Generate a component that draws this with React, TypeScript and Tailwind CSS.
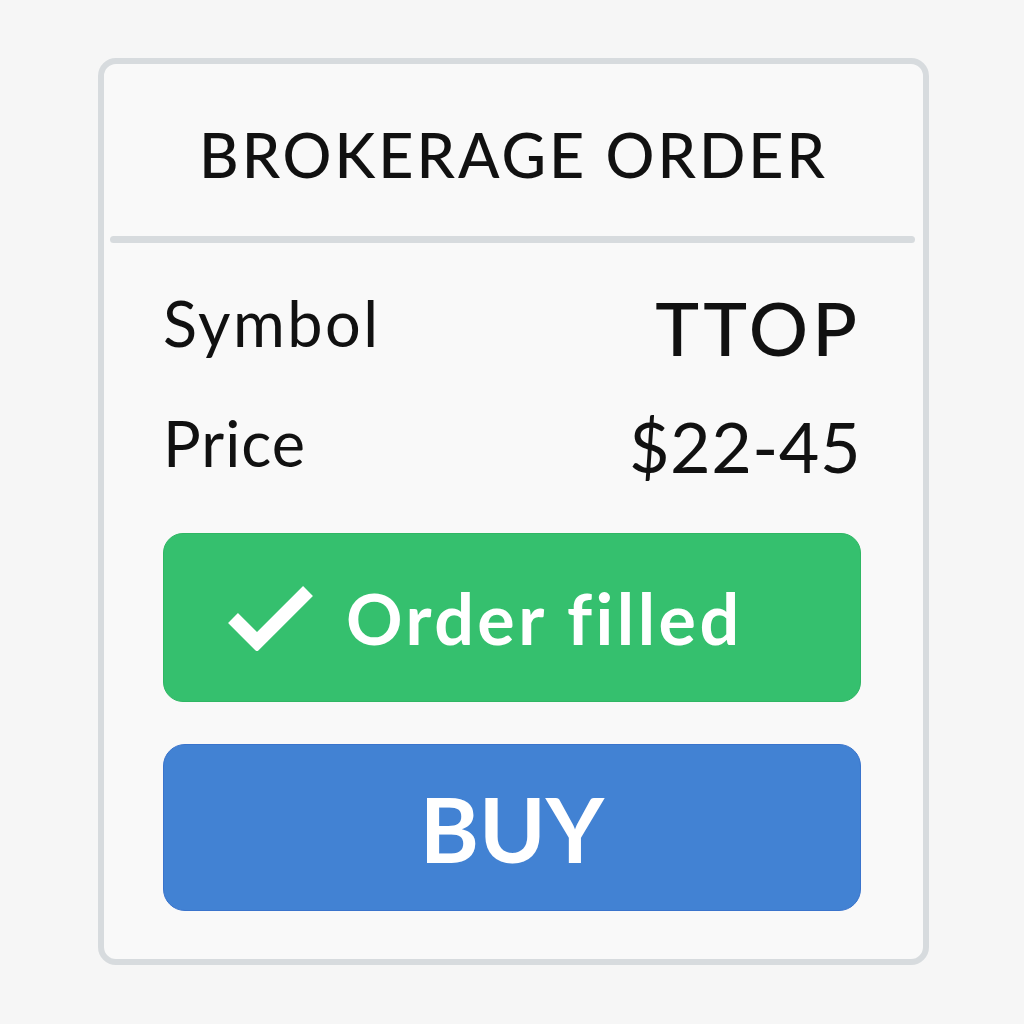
export default function App() {
  return (
    <div className="min-h-screen w-full bg-[#f6f6f6] pt-[58px] pl-[98px]" style={{ height: 1024 }}>
      <div className="flex h-[907px] w-[831px] flex-col rounded-[18px] border-[6px] border-[#d7dbde] bg-[#f9f9f9] font-['Lato',sans-serif] text-[#111]">
        {/* Header */}
        <div className="flex h-[172px] items-center justify-center pt-[8px]">
          <h1 className="text-[61px] font-medium leading-none tracking-[3px]">BROKERAGE ORDER</h1>
        </div>
        <div className="ml-[6px] mr-[8px] h-[7px] rounded-full bg-[#d7dbde]" />

        {/* Rows */}
        <div className="flex flex-col pl-[59px] pr-[62px]">
          <div className="flex h-[128px] items-end justify-between">
            <span className="mb-[17px] text-[63px] leading-none tracking-[2.5px]">Symbol</span>
            <span className="mb-[6px] text-[74px] font-medium leading-none tracking-[4px]">TTOP</span>
          </div>
          <div className="flex h-[118px] items-end justify-between">
            <span className="mb-[15px] text-[63px] leading-none tracking-[1px]">Price</span>
            <span className="mb-[8px] text-[70px] leading-none tracking-[0.5px]">$22-45</span>
          </div>

          <div className="mt-[44px] flex h-[169px] items-center rounded-[20px] border border-[#2fb764] bg-[#35c06e] pl-[64px] text-white">
            <svg width="86" height="66" viewBox="0 0 86 66" className="shrink-0">
              <path d="M5 33 L29 57 L80 6" fill="none" stroke="white" strokeWidth="14" />
            </svg>
            <span className="ml-[32px] text-[70px] font-bold leading-none tracking-[3.5px]">Order filled</span>
          </div>

          <div className="mt-[42px] flex h-[167px] items-center justify-center rounded-[22px] border border-[#3a74cc] bg-[#4282d3] text-white">
            <span className="text-[90px] font-bold leading-none">BUY</span>
          </div>
        </div>
      </div>
    </div>
  );
}
